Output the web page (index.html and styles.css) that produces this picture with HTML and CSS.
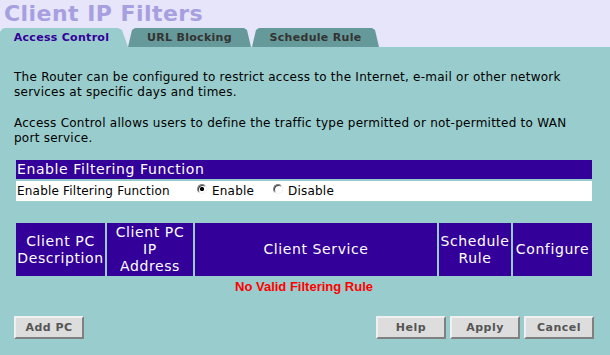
FILE: index.html
```html
<!DOCTYPE html>
<html lang="en">
  <head>
    <meta charset="UTF-8" />
    <meta name="viewport" content="width=device-width, initial-scale=1.0" />
    <title>Client IP Filters</title>
    <link rel="stylesheet" href="styles.css">
  </head>
  <body>
    <div class="top">
      <h1 class="title">Client IP Filters</h1>
      <div class="tabs">
        <a class="tab active">Access Control</a>
        <a class="tab tab-url">URL Blocking</a>
        <a class="tab tab-schedule">Schedule Rule</a>
      </div>
    </div>

    <div class="content">
      <p class="intro">The Router can be configured to restrict access to the Internet, e-mail or other network services at specific days and times.</p>
      <p class="intro">Access Control allows users to define the traffic type permitted or not-permitted to WAN port service.</p>

      <!-- Enable filtering -->
      <table class="filter-table">
        <tr>
          <th class="filter-head">Enable Filtering Function</th>
        </tr>
        <tr class="filter-row">
          <td>
            <div class="filter-line">
              <span class="filter-label">Enable Filtering Function</span>
              <label class="choice"><input type="radio" name="filter" class="radio" checked />Enable</label>
              <label class="choice"><input type="radio" name="filter" class="radio" />Disable</label>
            </div>
          </td>
        </tr>
      </table>

      <!-- Rules list -->
      <table class="rules">
        <tr>
          <th class="c-desc">Client PC<br>Description</th>
          <th class="c-ip">Client PC<br>IP<br>Address</th>
          <th>Client Service</th>
          <th class="c-rule">Schedule<br>Rule</th>
          <th class="c-conf">Configure</th>
        </tr>
        <tr>
          <td colspan="5" class="no-rule">No Valid Filtering Rule</td>
        </tr>
      </table>

      <div class="actions">
        <button>Add PC</button>
        <div class="button-group">
          <button>Help</button>
          <button>Apply</button>
          <button>Cancel</button>
        </div>
      </div>
    </div>
  </body>
</html>
```

FILE: styles.css
```css
body {
  margin: 0;
  background-color: #99cccc;
  font-family: "DejaVu Sans", Verdana, sans-serif;
  color: #000;
}
.top {
  background-color: #e6e5fa;
  height: 47px;
}
.title {
  margin: 0;
  padding-left: 4px;
  height: 28px;
  font-size: 22px;
  line-height: 27px;
  letter-spacing: 0.45px;
  font-weight: bold;
  color: #a69fe0;
}
.tabs {
  display: flex;
  height: 19px;
}
.tab {
  display: block;
  height: 19px;
  line-height: 19px;
  font-size: 11px;
  font-weight: bold;
  letter-spacing: 0.3px;
  text-align: center;
  color: #333333;
  background-color: #669999;
  clip-path: polygon(0 100%, 4px 2px, 7px 0, calc(100% - 7px) 0, calc(100% - 4px) 2px, 100% 100%);
}
.tab.active {
  width: 128px;
  padding-right: 5px;
  box-sizing: border-box;
  color: #330099;
  background-color: #99cccc;
  clip-path: polygon(0 100%, 0 4px, 2px 1px, 5px 0, calc(100% - 10px) 0, calc(100% - 6px) 2px, 100% 100%);
}
.tab-url {
  width: 123px;
}
.tab-schedule {
  width: 127px;
  margin-left: 1px;
}
.content {
  padding: 0 16px 0 14px;
}
.intro {
  margin: 23px 0 0;
  font-size: 12px;
  line-height: 15px;
  letter-spacing: 0.25px;
}
.intro + .intro {
  margin-top: 16px;
}
.filter-table {
  width: 100%;
  border-spacing: 2px;
  margin-top: 12px;
}
.filter-head {
  background-color: #330099;
  color: white;
  font-weight: normal;
  font-size: 14px;
  letter-spacing: 0.6px;
  line-height: 19px;
  padding: 0 1px;
  text-align: left;
}
.filter-row td {
  background-color: white;
  padding: 0 1px;
  font-size: 12px;
  letter-spacing: 0.2px;
  line-height: 20px;
}
.filter-line {
  display: flex;
  align-items: center;
}
.filter-label {
  width: 180px;
}
.choice {
  display: flex;
  align-items: center;
  margin-right: 19px;
}
.radio {
  appearance: none;
  width: 10px;
  height: 10px;
  margin: 0 5px 4px 0;
  border-radius: 50%;
  border: 1px solid;
  border-color: #808080 #f0f0f0 #f0f0f0 #808080;
  box-shadow: inset 1px 1px 0 #404040;
  background-color: white;
}
.radio:checked {
  background: radial-gradient(circle, #000 0, #000 1.8px, #fff 2.4px);
}
.rules {
  width: 100%;
  border-spacing: 2px;
  margin-top: 18px;
  table-layout: fixed;
}
.rules th {
  background-color: #330099;
  color: white;
  font-weight: normal;
  font-size: 14px;
  letter-spacing: 0.6px;
  line-height: 17px;
  padding: 1px 0;
}
.c-desc {
  width: 89px;
}
.c-ip {
  width: 86px;
}
.c-rule {
  width: 72px;
}
.c-conf {
  width: 79px;
}
.no-rule {
  padding: 0;
  text-align: center;
  color: #ff0000;
  font-family: "Liberation Sans", Arial, sans-serif;
  font-weight: bold;
  font-size: 13px;
  line-height: 18px;
}
.actions {
  display: flex;
  justify-content: space-between;
  margin-top: 18px;
}
.button-group {
  display: flex;
  gap: 4px;
}
button {
  width: 70px;
  height: 23px;
  padding: 0;
  background-color: #dddddd;
  border: 2px solid;
  border-color: #f0f0f0 #808080 #808080 #f0f0f0;
  font-family: "DejaVu Sans", Verdana, sans-serif;
  font-size: 11px;
  font-weight: bold;
  letter-spacing: 0.5px;
  color: #555555;
}
```
